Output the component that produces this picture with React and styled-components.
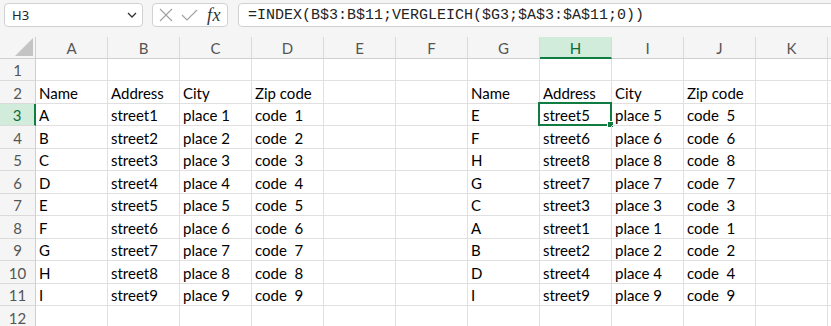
import React from 'react';
import styled, { createGlobalStyle } from 'styled-components';

const Global = createGlobalStyle`
  html, body { margin: 0; padding: 0; }
  body { width: 831px; height: 326px; overflow: hidden; background: #ffffff; }
`;

const Page = styled.div`
  width: 831px;
  height: 326px;
  overflow: hidden;
  background: #f5f5f5;
  display: flex;
  flex-direction: column;
`;

const Toolbar = styled.div`
  height: 37px;
  flex: none;
  box-sizing: border-box;
  display: flex;
  align-items: flex-start;
  padding: 3px 0 0 4px;
  background: #f5f5f5;
`;

const NameBox = styled.div`
  width: 139px;
  height: 24px;
  box-sizing: border-box;
  border: 1px solid #d1d1d1;
  border-radius: 4px;
  background: #fff;
  display: flex;
  align-items: center;
  justify-content: space-between;
  padding: 0 5px 0 7px;
  font-family: "Noto Sans", "Open Sans", sans-serif;
  font-size: 13px;
  color: #242424;
`;

const FxBox = styled.div`
  margin-left: 9px;
  width: 76px;
  height: 24px;
  box-sizing: border-box;
  border: 1px solid #d1d1d1;
  border-radius: 4px;
  background: #fff;
  display: flex;
  align-items: center;
  padding: 0 0 0 6px;
  gap: 8px;
`;

const Fx = styled.span`
  font-family: "Liberation Serif", "DejaVu Serif", serif;
  font-style: italic;
  font-size: 18px;
  color: #333;
  margin-left: 1px;
  letter-spacing: 0.5px;
`;

const FormulaInput = styled.div`
  margin-left: 10px;
  flex: 1;
  margin-right: -10px;
  height: 24px;
  box-sizing: border-box;
  border: 1px solid #d1d1d1;
  border-radius: 4px;
  background: #fff;
  display: flex;
  align-items: center;
  padding-left: 9px;
  font-family: "Liberation Mono", "DejaVu Sans Mono", monospace;
  font-size: 15px;
  color: #242424;
  white-space: pre;
`;

const Sheet = styled.div`
  flex: 1;
  display: grid;
  grid-template-columns: 36px repeat(11, 72px) 1fr;
  grid-template-rows: 22px;
  grid-auto-rows: auto;
  align-content: start;
  background: #fff;
  font-family: Lato, "Liberation Sans", sans-serif;
  font-size: 15px;
`;

const HeaderCell = styled.div`
  position: relative;
  box-sizing: border-box;
  background: ${p => (p.$sel ? '#d2ecdc' : '#f5f5f5')};
  border-right: 1px solid #dadada;
  border-bottom: ${p => (p.$sel ? '2px solid #107c41' : '1px solid #cfcfcf')};
  color: ${p => (p.$sel ? '#0e6b37' : '#555')};
  display: flex;
  align-items: center;
  justify-content: center;
  padding-top: 1px;
`;

const Corner = styled.div`
  box-sizing: border-box;
  background: #f5f5f5;
  border-right: 1px solid #cfcfcf;
  border-bottom: 1px solid #cfcfcf;
  display: flex;
  align-items: flex-end;
  justify-content: flex-end;
  padding: 0 2px 2px 0;
`;

const RowHead = styled.div`
  box-sizing: border-box;
  height: ${p => p.$h}px;
  background: ${p => (p.$sel ? '#d2ecdc' : '#f5f5f5')};
  border-right: ${p => (p.$sel ? '2px solid #107c41' : '1px solid #cfcfcf')};
  border-bottom: 1px solid #dadada;
  color: ${p => (p.$sel ? '#0e6b37' : '#555')};
  display: flex;
  align-items: center;
  justify-content: center;
  padding-top: 1px;
`;

const Cell = styled.div`
  position: relative;
  box-sizing: border-box;
  height: ${p => p.$h}px;
  border-right: 1px solid #e0e0e0;
  border-bottom: 1px solid #e0e0e0;
  color: #000;
  padding: 1px 0 0 3px;
  display: flex;
  align-items: center;
  white-space: pre;
  overflow: visible;
`;

const Selection = styled.div`
  position: absolute;
  left: -2px;
  top: -2px;
  right: -1px;
  bottom: -1px;
  border: 2px solid #107c41;
  pointer-events: none;
  &::after {
    content: '';
    position: absolute;
    right: -4px;
    bottom: -4px;
    width: 5px;
    height: 5px;
    background: #107c41;
    border: 1px solid #fff;
  }
`;

const cols = ['A', 'B', 'C', 'D', 'E', 'F', 'G', 'H', 'I', 'J', 'K', ''];

const left = [
  ['A', 1], ['B', 2], ['C', 3], ['D', 4], ['E', 5], ['F', 6], ['G', 7], ['H', 8], ['I', 9],
];
const right = [
  ['E', 5], ['F', 6], ['H', 8], ['G', 7], ['C', 3], ['A', 1], ['B', 2], ['D', 4], ['I', 9],
];

function rowData(r) {
  const arr = new Array(12).fill('');
  if (r === 2) {
    arr[0] = 'Name'; arr[1] = 'Address'; arr[2] = 'City'; arr[3] = 'Zip code';
    arr[6] = 'Name'; arr[7] = 'Address'; arr[8] = 'City'; arr[9] = 'Zip code';
  } else if (r >= 3 && r <= 11) {
    const [l, ln] = left[r - 3];
    const [g, gn] = right[r - 3];
    arr[0] = l; arr[1] = `street${ln}`; arr[2] = `place ${ln}`; arr[3] = `code  ${ln}`;
    arr[6] = g; arr[7] = `street${gn}`; arr[8] = `place ${gn}`; arr[9] = `code  ${gn}`;
  }
  return arr;
}

const XIcon = () => (
  <svg width="14" height="14" viewBox="0 0 14 14">
    <path d="M1 1 L13 13 M13 1 L1 13" stroke="#a0a0a0" strokeWidth="1.1" fill="none" />
  </svg>
);

const CheckIcon = () => (
  <svg width="17" height="12" viewBox="0 0 17 12">
    <path d="M1 6 L6 11 L16 1" stroke="#a0a0a0" strokeWidth="1.1" fill="none" />
  </svg>
);

const Chevron = () => (
  <svg width="10" height="6" viewBox="0 0 10 6">
    <path d="M1 1 L5 5 L9 1" stroke="#333" strokeWidth="1.3" fill="none" />
  </svg>
);

export default function App() {
  const rows = Array.from({ length: 12 }, (_, i) => i + 1);
  return (
    <Page>
      <Global />
      <Toolbar>
        <NameBox>
          <span>H3</span>
          <Chevron />
        </NameBox>
        <FxBox>
          <XIcon />
          <CheckIcon />
          <Fx>fx</Fx>
        </FxBox>
        <FormulaInput>=INDEX(B$3:B$11;VERGLEICH($G3;$A$3:$A$11;0))</FormulaInput>
      </Toolbar>
      <Sheet>
        <Corner>
          <svg width="18" height="18" viewBox="0 0 18 18">
            <path d="M18 0 L18 18 L0 18 Z" fill="#c4c4c4" />
          </svg>
        </Corner>
        {cols.map((c, i) => (
          <HeaderCell key={'h' + i} $sel={c === 'H'}>{c}</HeaderCell>
        ))}
        {rows.map(r => {
          const h = r % 2 === 1 ? 22 : 23;
          const data = rowData(r);
          return (
            <React.Fragment key={r}>
              <RowHead $h={h} $sel={r === 3}>{r}</RowHead>
              {data.map((v, ci) => (
                <Cell key={ci} $h={h}>
                  {v}
                  {r === 3 && ci === 7 && <Selection />}
                </Cell>
              ))}
            </React.Fragment>
          );
        })}
      </Sheet>
    </Page>
  );
}
